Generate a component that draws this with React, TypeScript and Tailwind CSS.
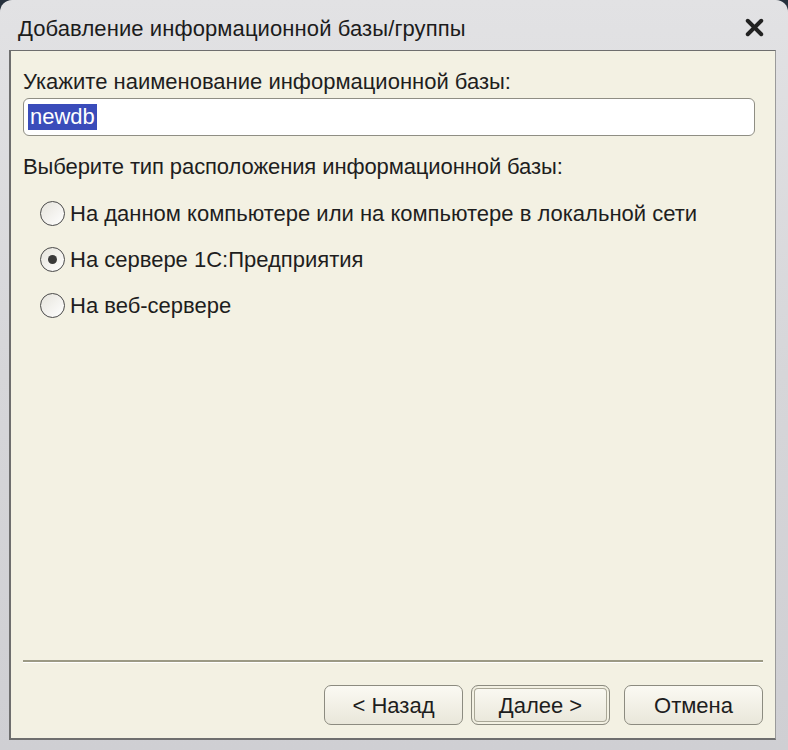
import { X } from "lucide-react";

const options = [
  { label: "На данном компьютере или на компьютере в локальной сети", checked: false },
  { label: "На сервере 1С:Предприятия", checked: true },
  { label: "На веб-сервере", checked: false },
];

function Radio({ checked }: { checked: boolean }) {
  return (
    <span className="w-[25px] h-[25px] rounded-full border-[1.5px] border-[#4a4a4a] bg-gradient-to-br from-[#e6e4dc] to-white flex items-center justify-center shrink-0">
      {checked && <span className="w-[9px] h-[9px] rounded-full bg-[#3a3a3a]" />}
    </span>
  );
}

function Button({ children, primary, className = "" }: { children: React.ReactNode; primary?: boolean; className?: string }) {
  return (
    <button
      className={`w-[139px] h-[40px] rounded-[7px] border border-[#8c8b80] bg-gradient-to-b from-[#fbfaf3] to-[#e9e7da] text-[22px] text-[#1e1e1e] flex items-center justify-center ${
        primary ? "shadow-[inset_0_0_0_2px_#f3f1e3,inset_0_0_0_3px_#a9a797]" : ""
      } ${className}`}
    >
      {children}
    </button>
  );
}

export default function App() {
  return (
    <div className="w-[788px] h-[750px] bg-[#27313d] overflow-hidden font-['Liberation_Sans',Arial,sans-serif]">
      <div className="h-full rounded-t-[12px] bg-gradient-to-b from-[#e2e2e4] via-[#d6d6d9] to-[#cfcfd3] flex flex-col pl-[9px] pr-[12px] pb-[10px]">
        <div className="h-[50px] flex items-center justify-between pl-[9px] pr-[8px] shrink-0">
          <span className="text-[22px] text-[#1c1c1c] tracking-[0.1px] pt-[6px]">
            Добавление информационной базы/группы
          </span>
          <X className="w-[27px] h-[27px] text-[#222] mt-[4px]" strokeWidth={3.5} />
        </div>

        <div className="flex-1 bg-[#f3f1e3] border-l-2 border-t border-b-2 border-[#6e6e6e] border-r border-r-[#9a9a9a] flex flex-col pl-[12px] pr-[12px]">
          <div className="text-[22px] text-[#1e1e1e] mt-[18px] leading-[26px]">
            Укажите наименование информационной базы:
          </div>
          <div className="mt-[3px] h-[38px] mr-[8px] rounded-[6px] border border-[#8f8e84] bg-white flex items-center pl-[4px]">
            <span className="bg-[#3a4cba] text-white text-[22px] leading-[26px] px-[2px]">newdb</span>
          </div>
          <div className="text-[22px] text-[#1e1e1e] mt-[18px] leading-[26px] tracking-[-0.1px]">
            Выберите тип расположения информационной базы:
          </div>
          <div className="flex flex-col gap-[20px] mt-[20px] pl-[17px]">
            {options.map((o) => (
              <div key={o.label} className="flex items-center gap-[5px] h-[26px]">
                <Radio checked={o.checked} />
                <span className="text-[22px] text-[#1e1e1e]">{o.label}</span>
              </div>
            ))}
          </div>

          <div className="flex-1" />
          <div className="h-[3px] border-t-2 border-[#9c9a85] border-b border-b-white mt-[2px]" />
          <div className="flex justify-end gap-[8px] mt-[22px] mb-[13px]">
            <Button>&lt; Назад</Button>
            <Button primary>Далее &gt;</Button>
            <Button className="ml-[6px]">Отмена</Button>
          </div>
        </div>
      </div>
    </div>
  );
}
